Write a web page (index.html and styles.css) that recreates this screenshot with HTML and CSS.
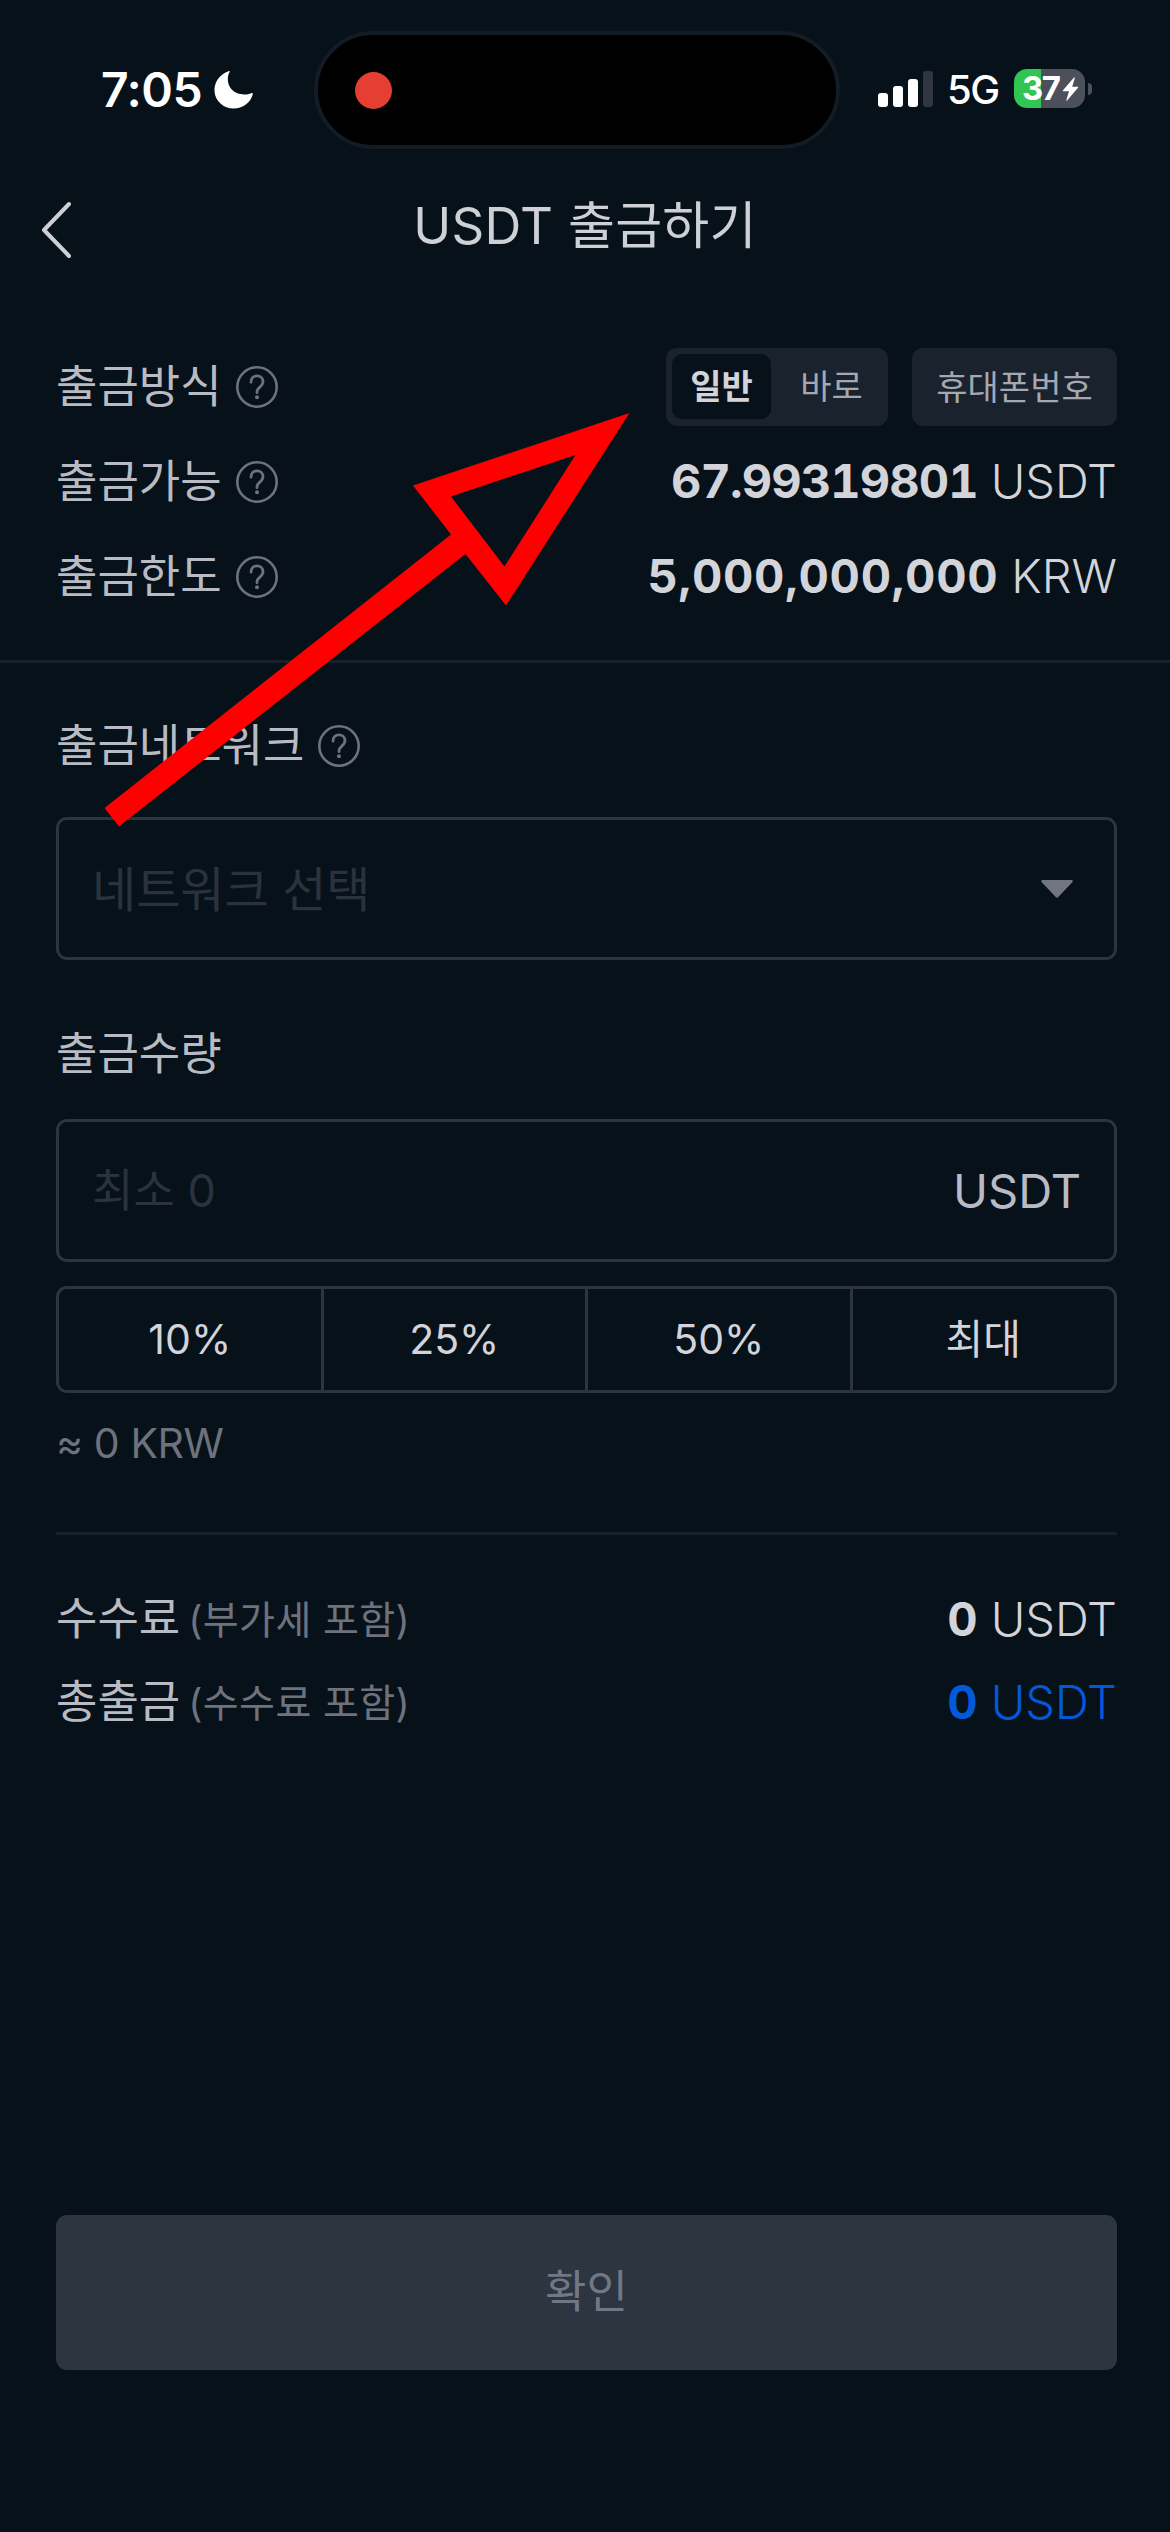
FILE: index.html
```html
<!DOCTYPE html>
<html lang="ko">
<head>
<meta charset="utf-8">
<title>USDT 출금하기</title>
<link rel="stylesheet" href="styles.css">
</head>
<body>
<svg class="defs" width="0" height="0" aria-hidden="true">
  <symbol id="help" viewBox="0 0 44 44">
    <circle cx="22" cy="22" r="19.7" fill="none" stroke="currentColor" stroke-width="2.6"/>
    <path d="M16 17.2c0-3.8 2.6-6.4 6-6.4s6 2.4 6 5.8c0 3-1.7 4.4-3.4 5.7-1.7 1.300-2.600 2.400-2.600 4.500v.9" fill="none" stroke="currentColor" stroke-width="2.8" stroke-linecap="round"/>
    <circle cx="22" cy="32.200" r="2" fill="currentColor"/>
  </symbol>
</svg>
<div class="screen">
  <div class="statusbar">
    <span class="time">7:05</span>
    <svg class="moon" width="40" height="40" viewBox="0 0 40 40"><path d="M15 1C5 4.500 0 12.500 0.500 21.500 1.200 31 9.500 38.500 19.500 38.500c9.500 0 17-5.500 19.300-14.200.2-1-.6-1.500-1.500-1.100-2.300 1-4.500 1.400-7.300 1.300C20 24.300 13.500 17.500 13.800 8.500c.1-2.400.6-4.200 1.700-6.300.5-.9.2-1.500-.5-1.200z" fill="#fff"/></svg>
    <div class="island"><span class="rec"></span></div>
    <svg class="signal" width="56" height="36" viewBox="0 0 56 36"><g fill="#fff"><rect x="0" y="22" width="10" height="14" rx="3"/><rect x="15" y="15" width="10" height="21" rx="3"/><rect x="30" y="8" width="10" height="28" rx="3"/></g><rect x="45" y="0" width="10" height="36" rx="3" fill="#30363f"/></svg>
    <span class="network">5G</span>
    <div class="battery"><span class="level">37</span><svg width="17" height="24" viewBox="0 0 17 24"><path d="M12 .5 1 13.200c-.5.600-.2 1 .4 1H7L4.300 23.200c-.1.700.3.800.8.300L16 10.800c.5-.6.2-1-.4-1h-5.400L12.800 1c.1-.7-.4-.9-.8-.5z" fill="#fff"/></svg></div>
    <span class="battery-cap"></span>
  </div>

  <header class="titlebar">
    <svg class="back" width="32" height="58" viewBox="0 0 32 58"><path d="M29 3 4 29l25 26" fill="none" stroke="#ced0d5" stroke-width="4" stroke-linecap="round" stroke-linejoin="round"/></svg>
    <h1 class="title">USDT 출금하기</h1>
  </header>

  <section class="summary">
    <div class="row">
      <span class="label">출금방식</span><svg class="help"><use href="#help"/></svg>
      <div class="modes">
        <div class="segmented"><span class="segment active">일반</span><span class="segment">바로</span></div>
        <span class="phone">휴대폰번호</span>
      </div>
    </div>
    <div class="row">
      <span class="label">출금가능</span><svg class="help"><use href="#help"/></svg>
      <span class="value"><b class="num available">67.99319801</b><span class="unit">USDT</span></span>
    </div>
    <div class="row">
      <span class="label">출금한도</span><svg class="help"><use href="#help"/></svg>
      <span class="value"><b class="num limit">5,000,000,000</b><span class="unit">KRW</span></span>
    </div>
  </section>

  <section class="form">
    <div class="field-label"><span class="label">출금네트워크</span><svg class="help"><use href="#help"/></svg></div>
    <div class="box">
      <span class="placeholder network-name">네트워크 선택</span>
      <svg width="34" height="20" viewBox="0 0 34 20"><path d="M2.500 1h29c1.500 0 1.800 1.200.8 2.200L18.300 18c-.8.900-1.800.9-2.600 0L1.700 3.200C.7 2.200 1 1 2.500 1z" fill="#717582"/></svg>
    </div>
    <div class="field-label amount-label"><span class="label">출금수량</span></div>
    <div class="box amount">
      <span class="placeholder">최소 0</span>
      <span class="box-unit">USDT</span>
    </div>
    <div class="ratios"><span class="ratio">10%</span><span class="ratio">25%</span><span class="ratio">50%</span><span class="ratio">최대</span></div>
    <div class="approx">≈ 0 KRW</div>
    <div class="totals">
      <div class="total"><span class="label">수수료</span><span class="note">(부가세 포함)</span><span class="value"><b class="num">0</b><span class="unit">USDT</span></span></div>
      <div class="total"><span class="label">총출금</span><span class="note">(수수료 포함)</span><span class="value accent"><b class="num">0</b><span class="unit">USDT</span></span></div>
    </div>
  </section>

  <div class="confirm">확인</div>

  <svg class="pointer" width="526" height="414" viewBox="0 0 526 414"><path fill="#f00" fill-rule="evenodd" d="M525.500 0 309 72.500 347 121.500 .5 395 15 413.500 361.500 141 402 192.500zM471.500 42 347 83.500 400.500 153.500z"/></svg>
</div>
</body>
</html>
```
FILE: styles.css
```css
* { box-sizing: border-box; }
body {
  margin: 0;
  background: #06111a;
  color: #b8bbc3;
  font-family: Inter, "Noto Sans CJK KR", sans-serif;
}
.defs { display: block; height: 0; }
.screen {
  position: relative;
  width: 1170px;
  height: 2532px;
  display: flex;
  flex-direction: column;
  overflow: hidden;
  white-space: nowrap;
}

/* Status bar */
.statusbar {
  height: 180px;
  padding-left: 101px;
  display: flex;
  align-items: center;
  color: #fff;
  line-height: 1;
}
.time { width: 113px; font-size: 48px; font-weight: 600; letter-spacing: -0.5px; }
.moon { margin-right: 60px; }
.island {
  width: 526px;
  height: 118px;
  padding-left: 37px;
  display: flex;
  align-items: center;
  background: #000;
  border: 4px solid #131b25;
  border-radius: 59px;
}
.rec { width: 37px; height: 37px; border-radius: 50%; background: #e43f32; }
.signal { margin: 0 13px 3px 38px; }
.network { width: 67px; font-size: 40px; font-weight: 500; letter-spacing: -1.5px; }
.battery {
  width: 71px;
  height: 39px;
  margin-bottom: 3px;
  padding-left: 8px;
  display: flex;
  align-items: center;
  border-radius: 13px;
  background: linear-gradient(90deg, #33c553 27px, #4b505b 27px);
}
.level { width: 40px; font-size: 33px; font-weight: 700; letter-spacing: -1.5px; }
.battery-cap {
  width: 4px;
  height: 12px;
  margin: 0 0 3px 3px;
  border-radius: 0 4px 4px 0;
  background: #4b505b;
}

/* Title */
.titlebar { height: 100px; display: flex; align-items: center; }
.back { width: 32px; margin-left: 40px; }
.title {
  flex: 1;
  margin: -8px 72px 0 0;
  font-size: 51px;
  font-weight: 400;
  line-height: 74px;
  letter-spacing: 0.3px;
  text-align: center;
  color: #ced0d5;
}

/* Balance summary */
.summary {
  height: 383px;
  padding: 59px 53px 0 56px;
  border-bottom: 3px solid #18212b;
}
.row { height: 95px; display: flex; align-items: center; }
.label { font-size: 45px; line-height: 64px; color: #b8bbc3; }
.help { width: 44px; height: 44px; margin-left: 13px; color: #6e727f; }
.modes { display: flex; gap: 24px; margin-left: auto; }
.segmented, .phone {
  height: 78px;
  display: flex;
  align-items: center;
  background: #19222d;
  border-radius: 11px;
  font-size: 34px;
  color: #a4a8b3;
}
.segmented { width: 222px; padding: 6px; }
.segment { flex: 1; line-height: 65px; text-align: center; }
.segment.active { flex: 0 0 99px; background: #06111a; border-radius: 10px; color: #d2d4da; font-weight: 700; }
.segment:last-child { padding-left: 10px; }
.phone { width: 205px; padding-bottom: 3px; justify-content: center; }
.value { margin-left: auto; display: flex; gap: 13px; font-size: 47px; line-height: 64px; color: #d2d4da; }
.num { font-weight: 700; font-feature-settings: "tnum"; }
.available { letter-spacing: -0.9px; }
.limit { letter-spacing: 0.7px; }
.unit { font-weight: 350; }
.row .value { padding-bottom: 1px; }

/* Form */
.form { padding: 50px 53px 0 56px; }
.field-label { height: 66px; display: flex; align-items: center; }
.box {
  height: 143px;
  margin-top: 38px;
  padding: 0 40px 0 33px;
  display: flex;
  align-items: center;
  justify-content: space-between;
  border: 3px solid #2b3440;
  border-radius: 11px;
}
.placeholder { padding-bottom: 6px; font-size: 45px; color: #2a323e; }
.network-name { font-size: 48px; }
.amount-label { margin-top: 61px; }
.amount { margin-top: 32px; padding-right: 33px; }
.box-unit { font-size: 47px; color: #b8bbc3; }
.ratios {
  height: 107px;
  margin-top: 24px;
  display: flex;
  border: 3px solid #2b3440;
  border-radius: 11px;
  font-size: 41px;
  color: #d2d4da;
}
.ratio { flex: 1; line-height: 101px; text-align: center; }
.ratio + .ratio { border-left: 3px solid #2b3440; }
.approx { height: 139px; padding-top: 20px; font-size: 41px; line-height: 60px; letter-spacing: -0.4px; color: #6e727c; }
.totals { border-top: 3px solid #18212b; padding-top: 42px; }
.total { height: 83px; display: flex; align-items: center; }
.note { margin-left: 8px; padding-bottom: 4px; font-size: 39px; letter-spacing: 0.4px; color: #6e727c; }
.accent { color: #0259dc; }

/* Confirm button */
.confirm {
  height: 155px;
  margin: auto 53px 162px 56px;
  border-radius: 11px;
  background: #2c3540;
  color: #717787;
  font-size: 45px;
  line-height: 153px;
  text-align: center;
}

/* Annotation arrow over the form */
.pointer { position: absolute; left: 104px; top: 413px; }
```
